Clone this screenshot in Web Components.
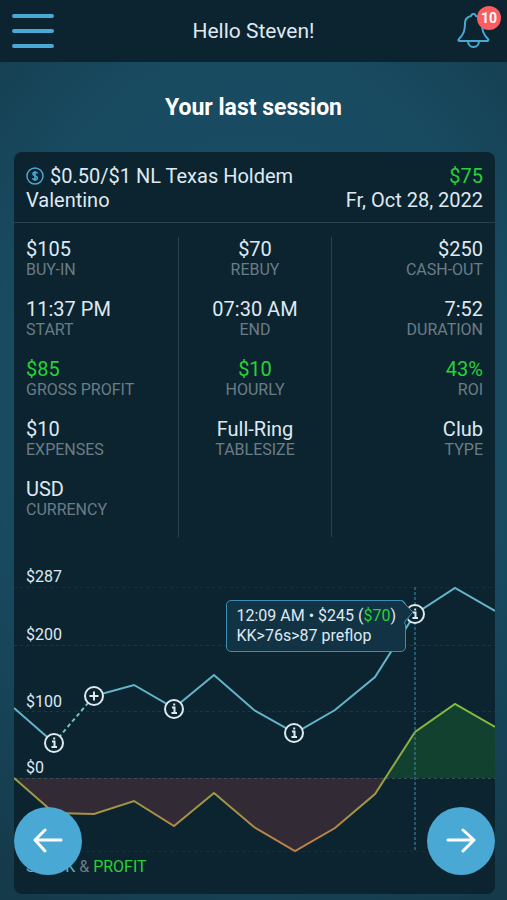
<!DOCTYPE html>
<html lang="en">
<head>
<meta charset="utf-8">
<meta name="viewport" content="width=device-width, initial-scale=1">
<title>Your last session</title>
<style>
  :root {
    --panel: #0c242f;
    --text: #dfe9f3;
    --muted: #6b7c86;
    --accent: #49a8d4;
    --profit: #27d236;
    --rule: #2a414c;
  }
  body {
    margin: 0;
    min-height: 100vh;
    font-family: Roboto, "Liberation Sans", sans-serif;
    color: var(--text);
    background: #153a4a radial-gradient(ellipse 85% 65% at 50% 45%, #1b526a 0%, #184a60 60%, #153a4a 100%) no-repeat;
  }
</style>
</head>
<body>
<session-app></session-app>

<script>
const define = (name, html, setup) => {
  const template = document.createElement('template');
  template.innerHTML = html;
  customElements.define(name, class extends HTMLElement {
    constructor() {
      super();
      this.attachShadow({ mode: 'open' }).append(template.content.cloneNode(true));
    }
    connectedCallback() {
      if (setup) setup(this, this.shadowRoot);
    }
  });
};

define('app-header', `
  <style>
    :host { display: block; background: var(--panel); }
    header { display: grid; grid-template-columns: 1fr auto 1fr; align-items: center; height: 62px; padding: 0 12px; }
    button { display: block; padding: 0; border: 0; background: none; color: var(--accent); cursor: pointer; }
    svg { display: block; fill: none; stroke: currentColor; stroke-linecap: round; stroke-linejoin: round; }
    .greeting { font-size: 21px; line-height: 24px; }
    .bell { position: relative; justify-self: end; padding-right: 4px; }
    .badge { position: absolute; top: -6px; right: -6px; width: 24px; height: 24px; border-radius: 50%;
      background: #fc5c62; color: #fff; font: 700 14px/24px Roboto, sans-serif; text-align: center; }
  </style>
  <header>
    <button aria-label="Menu"><svg width="42" height="34" stroke-width="4"><path d="M2 2h38M2 17h38M2 32h38"/></svg></button>
    <div class="greeting"><slot></slot></div>
    <button class="bell" aria-label="Notifications">
      <svg width="38" height="38" viewBox="0 0 38 38" stroke-width="2">
        <path d="M6 27c5-5 6-9 6-16 0-3 2-6 6-7 1-3 4-3 5 0 4 1 6 4 6 7 0 7 1 11 6 16 1 1 0 2-1 2H7c-2 0-2-1-1-2z"/>
        <path d="M15 29c0 3 2 6 5.500 6S26 32 26 29"/>
      </svg>
      <span class="badge">10</span>
    </button>
  </header>`);

define('stat-item', `
  <style>
    :host { display: block; height: 60px; }
    .value { font-size: 20px; line-height: 24px; color: var(--text); }
    .label { font-size: 16px; line-height: 18px; color: var(--muted); text-transform: uppercase; }
    :host([gain]) .value { color: var(--profit); }
  </style>
  <div class="value"><slot></slot></div>
  <div class="label"></div>`,
  (el, root) => { root.querySelector('.label').textContent = el.getAttribute('label'); });

define('stat-grid', `
  <style>
    :host { display: grid; grid-template-columns: 14fr 13fr 14fr; padding-top: 14px; }
    div { padding: 0 12px; }
    div + div { border-left: 1px solid var(--rule); text-align: center; }
    div:last-child { text-align: right; }
  </style>
  <div><slot name="start"></slot></div>
  <div><slot name="middle"></slot></div>
  <div><slot name="end"></slot></div>`);

define('chart-marker', `
  <style>
    :host { position: absolute; transform: translate(-50%, -50%); }
    button { display: block; padding: 0; border: 0; background: none; cursor: pointer; }
    svg { display: block; fill: none; stroke: #dfe9ef; stroke-width: 2; }
    :host([kind=add]) .info, :host(:not([kind=add])) .add { display: none; }
  </style>
  <button aria-label="Session event">
    <svg width="20" height="20" viewBox="0 0 20 20">
      <circle cx="10" cy="10" r="9" fill="#0c242f"/>
      <path class="add" d="M10 5.500v9M5.500 10h9"/>
      <path class="info" d="M8 8.500h2.500v5.500M7.500 14h5.500M9.200 5.500h2"/>
    </svg>
  </button>`);

define('chart-tooltip', `
  <style>
    :host { position: absolute; box-sizing: border-box; padding: 5px 9px; border: 1px solid #3a8fb6; border-radius: 5px;
      background: #123343; font-size: 16px; line-height: 20px; white-space: nowrap; }
    svg { position: absolute; top: -1px; right: -9px; fill: #123343; }
    .edge { fill: none; stroke: #3a8fb6; }
  </style>
  <slot></slot>
  <svg width="13" height="24" aria-hidden="true">
    <path d="M0 1L12 12L5 22V24H1V5z"/>
    <path class="edge" d="M0 .5Q2 1 3 3L12 12L5 20Q3.500 22 3.500 24"/>
  </svg>`);

define('session-chart', `
  <style>
    :host { display: block; }
    .plot { position: relative; height: 265px; }
    svg.lines { display: block; width: 100%; height: 100%; overflow: visible; }
    path { fill: none; vector-effect: non-scaling-stroke; }
    .grid { stroke: #20363f; stroke-dasharray: 3 3; }
    .faint { stroke: #152e39; }
    .zero { stroke: #3a5059; }
    .cursor { stroke: #3a8fb6; stroke-dasharray: 3 2; }
    .axis { position: absolute; left: 12px; font-size: 16px; line-height: 20px; transform: translateY(-100%); }
    .gain { color: var(--profit); }
    .legend { padding: 5px 12px 17px; font-size: 16px; line-height: 20px; color: var(--muted); }
    .stack { color: #63b5cb; }
  </style>
  <div class="plot">
    <svg class="lines" viewBox="0 0 481 265" preserveAspectRatio="none" aria-label="Stack and profit over time">
      <defs>
        <linearGradient id="profit" gradientUnits="userSpaceOnUse" x1="0" y1="117" x2="0" y2="264">
          <stop offset="0" stop-color="#7fbd3f"/><stop offset=".5" stop-color="#92a347"/><stop offset="1" stop-color="#c27c48"/>
        </linearGradient>
      </defs>
      <path style="fill:#322b35" d="M0 191L40 226L80 227L120 214L160 239L200 206L240 240L281 264L321 241L361 207L371 191Z"/>
      <path style="fill:#12412f" d="M371 191L401 145L441 117L481 140V191Z"/>
      <path class="grid faint" d="M0 .5H481M0 264.500H481"/>
      <path class="grid" d="M0 58.500H481M0 124.500H481"/>
      <path class="grid zero" d="M0 191.500H481"/>
      <path stroke="url(#profit)" stroke-width="2" d="M0 191L40 226L80 227L120 214L160 239L200 206L240 240L281 264L321 241L361 207L401 145L441 117L481 140"/>
      <path stroke="#63b5cb" stroke-width="2" d="M0 121L40 156M80 109L120 98L160 121L200 88L240 123L281 146L321 123L361 90L401 27L441 1L481 24"/>
      <path stroke="#6fc1bf" stroke-width="2" stroke-dasharray="4 3" d="M40 156L80 109"/>
      <path class="cursor" d="M401 0V265"/>
    </svg>
    <span class="axis" style="top:0">$287</span>
    <span class="axis" style="top:22%">$200</span>
    <span class="axis" style="top:47%">$100</span>
    <span class="axis" style="top:72%">$0</span>
    <chart-marker style="left:8.300%;top:59%"></chart-marker>
    <chart-marker kind="add" style="left:16.600%;top:41%"></chart-marker>
    <chart-marker style="left:33.200%;top:46%"></chart-marker>
    <chart-marker style="left:58.300%;top:55%"></chart-marker>
    <chart-marker style="left:83.300%;top:10%"></chart-marker>
    <chart-tooltip style="right:18.500%;top:5%">12:09 AM • $245 (<span class="gain">$70</span>)<br>KK&gt;76s&gt;87 preflop</chart-tooltip>
  </div>
  <div class="legend"><span class="stack">STACK</span> &amp; <span class="gain">PROFIT</span></div>`);

define('session-card', `
  <style>
    :host { display: block; margin: 0 12px 6px 14px; border-radius: 8px; background: var(--panel); overflow: hidden; }
    header { display: flex; justify-content: space-between; padding: 12px 12px 10px; border-bottom: 1px solid var(--rule); font-size: 20px; line-height: 24px; }
    .right { text-align: right; }
    .game { display: flex; align-items: center; gap: 6px; }
    .gain { color: var(--profit); }
    svg { fill: none; stroke: var(--accent); }
    .body { padding-bottom: 50px; }
  </style>
  <header>
    <div>
      <div class="game">
        <svg width="18" height="18" viewBox="0 0 18 18" stroke-width="1.500" aria-hidden="true">
          <circle cx="9" cy="9" r="8"/><path d="M11.500 6.500C11 5 7 4.800 6.800 6.900 6.600 9.200 11.400 8.400 11.400 11 11.400 13.200 7 13.200 6.500 11.300M9 4v10"/>
        </svg>
        <span>$0.50/$1 NL Texas Holdem</span>
      </div>
      <div>Valentino</div>
    </div>
    <div class="right"><div class="gain">$75</div><div>Fr, Oct 28, 2022</div></div>
  </header>
  <stat-grid class="body">
    <stat-item slot="start" label="Buy-in">$105</stat-item>
    <stat-item slot="start" label="Start">11:37 PM</stat-item>
    <stat-item slot="start" label="Gross profit" gain>$85</stat-item>
    <stat-item slot="start" label="Expenses">$10</stat-item>
    <stat-item slot="start" label="Currency">USD</stat-item>
    <stat-item slot="middle" label="Rebuy">$70</stat-item>
    <stat-item slot="middle" label="End">07:30 AM</stat-item>
    <stat-item slot="middle" label="Hourly" gain>$10</stat-item>
    <stat-item slot="middle" label="Tablesize">Full-Ring</stat-item>
    <stat-item slot="end" label="Cash-out">$250</stat-item>
    <stat-item slot="end" label="Duration">7:52</stat-item>
    <stat-item slot="end" label="ROI" gain>43%</stat-item>
    <stat-item slot="end" label="Type">Club</stat-item>
  </stat-grid>
  <session-chart></session-chart>`);

define('session-nav', `
  <style>
    :host { position: fixed; left: 14px; right: 12px; bottom: 25px; display: flex; justify-content: space-between; pointer-events: none; }
    button { display: grid; place-items: center; width: 68px; height: 68px; padding: 0; border: 0; border-radius: 50%;
      background: var(--accent); pointer-events: auto; cursor: pointer; }
    svg { fill: none; stroke: #fff; stroke-width: 3; stroke-linecap: round; stroke-linejoin: round; }
  </style>
  <button aria-label="Previous session"><svg width="30" height="26"><path d="M28 12H2M12 2L2 12L12 23"/></svg></button>
  <button aria-label="Next session"><svg width="30" height="26"><path d="M2 12H28M17 2L28 12L17 23"/></svg></button>`);

define('session-app', `
  <style>
    :host { display: block; }
    h1 { margin: 0; padding: 32px 12px 30px; font-size: 23px; line-height: 28px; font-weight: 700; text-align: center; color: #fff; }
  </style>
  <app-header>Hello Steven!</app-header>
  <main>
    <h1>Your last session</h1>
    <session-card></session-card>
  </main>
  <session-nav></session-nav>`);
</script>
</body>
</html>
